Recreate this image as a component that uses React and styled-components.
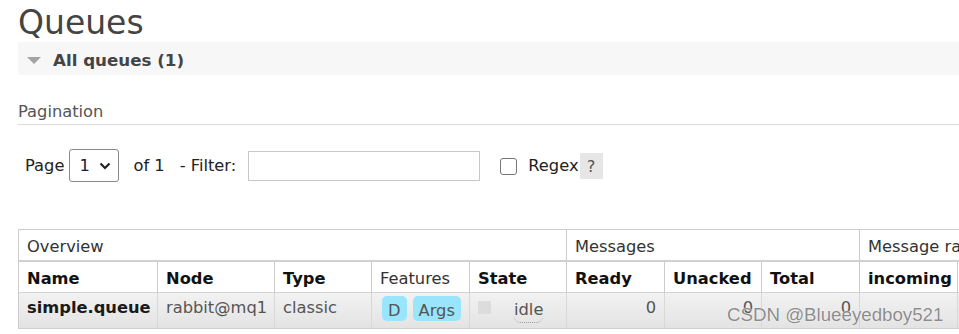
import React from "react";
import styled, { createGlobalStyle } from "styled-components";

const Global = createGlobalStyle`
  html, body { margin: 0; padding: 0; background: #fff; }
  body {
    width: 959px;
    height: 334px;
    overflow: hidden;
    font-family: "DejaVu Sans", Verdana, sans-serif;
    font-size: 16.3px;
    color: #222;
  }
`;

const Page = styled.div`
  position: relative;
  padding-left: 18px;
  width: 959px;
  box-sizing: border-box;
`;

const Title = styled.h1`
  margin: 0;
  padding-top: 4px;
  font-size: 33px;
  line-height: 38px;
  font-weight: normal;
  color: #444;
`;

const Band = styled.div`
  height: 33px;
  box-sizing: border-box;
  padding: 2px 0 0 9px;
  display: flex;
  align-items: center;
  gap: 12px;
  background: #f7f7f7;
  font-weight: bold;
  font-size: 16.7px;
  color: #444;
`;

const Triangle = styled.span`
  width: 0;
  height: 0;
  border-left: 7px solid transparent;
  border-right: 7px solid transparent;
  border-top: 7px solid #a3a3a3;
  margin-top: 1px;
`;

const SectionHead = styled.h3`
  margin: 27px 0 0;
  font-size: 16.3px;
  line-height: 20px;
  font-weight: normal;
  color: #555;
  padding-bottom: 2px;
  border-bottom: 1px solid #ddd;
`;

const Row = styled.div`
  margin-top: 24px;
  height: 33px;
  display: flex;
  align-items: center;
  padding-left: 7px;
  color: #222;
`;

const Label = styled.span`
  margin-left: ${(p) => p.$ml || 0}px;
  white-space: pre;
`;

const SelectBox = styled.div`
  margin-left: ${(p) => p.$ml || 0}px;
  width: 50px;
  height: 33px;
  box-sizing: border-box;
  border: 1px solid #8a8a8a;
  border-radius: 3px;
  display: flex;
  align-items: center;
  padding-left: 9px;
  gap: 9px;
  color: #1a1a3a;
`;

const TextInput = styled.div`
  margin-left: ${(p) => p.$ml || 0}px;
  width: 232px;
  height: 30px;
  box-sizing: border-box;
  border: 1px solid #c8c8c8;
  margin-top: 1px;
`;

const Checkbox = styled.span`
  margin-left: ${(p) => p.$ml || 0}px;
  width: 17px;
  height: 17px;
  box-sizing: border-box;
  border: 1px solid #767676;
  border-radius: 3px;
  margin-top: 2px;
`;

const Help = styled.span`
  margin-left: ${(p) => p.$ml || 0}px;
  width: 23px;
  height: 26px;
  background: #e6e6e6;
  color: #555;
  display: flex;
  align-items: center;
  justify-content: center;
  margin-top: 1px;
`;

const Grid = styled.div`
  margin-top: 47px;
  display: grid;
  grid-template-columns: 139px 117px 97px 98px 97px 98px 97px 98px 98px 98px 98px 98px;
  width: max-content;
  border-left: 1px solid #ccc;
  border-top: 1px solid #ccc;
`;

const Cell = styled.div`
  box-sizing: border-box;
  border-right: 1px solid #ccc;
  padding: 0 8px;
  white-space: nowrap;
  overflow: hidden;
`;

const GroupCell = styled(Cell)`
  grid-column: span ${(p) => p.$span};
  height: 32px;
  padding-top: 4px;
  line-height: 26px;
  border-bottom: 2px solid #d0d0d0;
  color: #333;
  background: #fff;
`;

const HeadCell = styled(Cell)`
  height: 31px;
  padding-top: 4px;
  line-height: 26px;
  border-bottom: 1px solid #d4d4d4;
  font-weight: ${(p) => (p.$normal ? "normal" : "bold")};
  color: ${(p) => (p.$normal ? "#333" : "#111")};
  background: #fff;
`;

const DataCell = styled(Cell)`
  height: 36px;
  padding-top: 2px;
  line-height: 26px;
  border-bottom: 1px solid #cfcfcf;
  border-right-color: #d8d8d8;
  background: linear-gradient(#f2f2f2, #e3e3e3);
  color: #555;
  text-align: ${(p) => (p.$right ? "right" : "left")};
  font-weight: ${(p) => (p.$bold ? "bold" : "normal")};
  ${(p) => p.$bold && "color: #1a1a1a;"}
`;

const Pills = styled.div`
  display: flex;
  gap: 6px;
  margin: 1px 0 0 2px;
`;

const Pill = styled.span`
  height: 25px;
  box-sizing: border-box;
  padding: 5px 6px 1px;
  line-height: 19px;
  border-radius: 5px;
  background: #99e6fc;
  color: #555;
`;

const StateWrap = styled.div`
  display: flex;
  align-items: flex-start;
`;

const StateDot = styled.span`
  width: 13px;
  height: 13px;
  margin-top: 6px;
  background: #dcdcdc;
`;

const StateText = styled.abbr`
  margin-left: 23px;
  margin-top: 2px;
  text-decoration: none;
  line-height: 25px;
  border-bottom: 1px dotted #999;
  border-radius: 0 0 7px 7px;
  color: #555;
`;

const Watermark = styled.div`
  position: absolute;
  left: 727px;
  top: 304px;
  font-family: "Liberation Sans", Arial, sans-serif;
  font-size: 18.7px;
  color: #8c8c8c;
  text-shadow: 0 0 1px #fff, 0 0 1px #fff;
  white-space: nowrap;
  pointer-events: none;
`;

const Chevron = () => (
  <svg width="12" height="8" viewBox="0 0 12 8">
    <path d="M1.5 1.5 L6 6 L10.5 1.5" fill="none" stroke="#222" strokeWidth="2.2" />
  </svg>
);

export default function App() {
  return (
    <>
      <Global />
      <Page>
        <Title>Queues</Title>
        <Band>
          <Triangle />
          <span>All queues (1)</span>
        </Band>
        <SectionHead>Pagination</SectionHead>
        <Row>
          <Label>Page</Label>
          <SelectBox $ml={5}>
            <span>1</span>
            <Chevron />
          </SelectBox>
          <Label $ml={14}>of 1</Label>
          <Label $ml={15}>- Filter:</Label>
          <TextInput $ml={12} />
          <Checkbox $ml={20} />
          <Label $ml={11}>Regex</Label>
          <Help $ml={1}>?</Help>
        </Row>
        <Grid>
          <GroupCell $span={5}>Overview</GroupCell>
          <GroupCell $span={3}>Messages</GroupCell>
          <GroupCell $span={4}>Message rates</GroupCell>

          <HeadCell>Name</HeadCell>
          <HeadCell>Node</HeadCell>
          <HeadCell>Type</HeadCell>
          <HeadCell $normal>Features</HeadCell>
          <HeadCell>State</HeadCell>
          <HeadCell>Ready</HeadCell>
          <HeadCell>Unacked</HeadCell>
          <HeadCell>Total</HeadCell>
          <HeadCell>incoming</HeadCell>
          <HeadCell>deliver / get</HeadCell>
          <HeadCell>ack</HeadCell>
          <HeadCell />

          <DataCell $bold>simple.queue</DataCell>
          <DataCell>rabbit@mq1</DataCell>
          <DataCell>classic</DataCell>
          <DataCell>
            <Pills>
              <Pill>D</Pill>
              <Pill>Args</Pill>
            </Pills>
          </DataCell>
          <DataCell>
            <StateWrap>
              <StateDot />
              <StateText title="idle">idle</StateText>
            </StateWrap>
          </DataCell>
          <DataCell $right>0</DataCell>
          <DataCell $right>0</DataCell>
          <DataCell $right>0</DataCell>
          <DataCell />
          <DataCell />
          <DataCell />
          <DataCell />
        </Grid>
        <Watermark>CSDN @Blueeyedboy521</Watermark>
      </Page>
    </>
  );
}
